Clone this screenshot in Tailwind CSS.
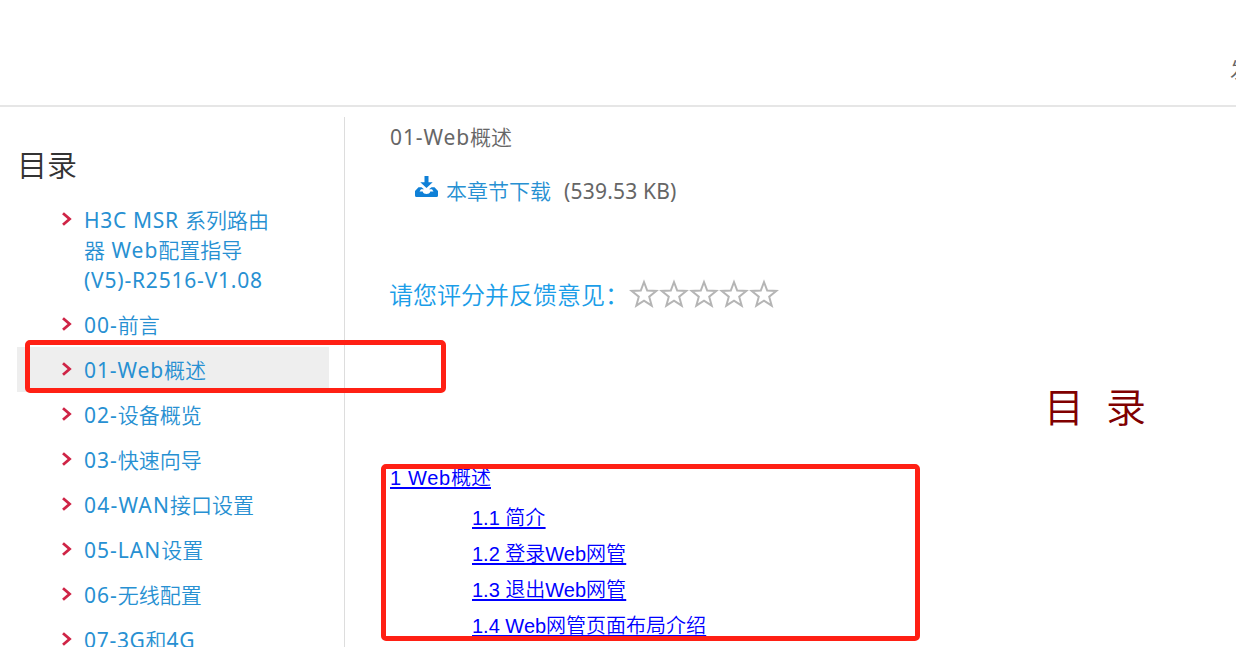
<!DOCTYPE html>
<html lang="zh-CN">
<head>
    <meta charset="UTF-8">
    <title>01-Web概述</title>
    <!-- Tailwind CSS -->
    <script src="https://cdn.jsdelivr.net/npm/@tailwindcss/browser@4"></script>
</head>
<body class="h-[647px] overflow-hidden bg-white font-['Noto_Sans','Noto_Sans_CJK_SC',sans-serif] text-[21px] font-[350] text-[#666]">
    <!-- Icons -->
    <svg class="hidden">
        <symbol id="arrow" viewBox="0 0 10 14">
            <path d="M1 1.2 L7.6 7 L1 12.8" fill="none" stroke="#cf2446" stroke-width="2.8"/>
        </symbol>
        <symbol id="star" viewBox="0 0 30 30">
            <path d="M15 3 L18.2 11.6 L27.3 12 L20.2 17.7 L22.7 26.7 L15 21.6 L7.3 26.7 L9.8 17.7 L2.7 12 L11.8 11.6 Z" fill="#fff" stroke="#b5b5b5" stroke-width="2"/>
        </symbol>
    </svg>

    <!-- Header -->
    <header class="flex h-[107px] justify-end overflow-hidden border-b-2 border-[#e6e6e6] pt-[54px]">
        <span class="-mr-[15px] h-[30px] leading-[30px]">发</span>
    </header>

    <div class="flex h-[540px] pt-[10px]">
        <!-- Sidebar -->
        <aside class="w-[345px] shrink-0 overflow-hidden border-r border-[#ddd] pl-[17px]">
            <h2 class="h-20 pt-[28px] text-[30px] leading-10 text-[#333]">目录</h2>
            <ul class="w-[312px] text-[#2790d2]">
                <li class="flex h-[105px] items-start pt-2">
                    <svg class="mt-[7px] ml-[45px] h-[14px] w-[10px] shrink-0"><use href="#arrow"/></svg>
                    <a href="#" class="ml-3 leading-[30px] whitespace-nowrap"><span class="font-normal tracking-[0.7px]">H3C MSR </span>系列路由<br>器<span class="font-normal tracking-[1px]"> Web</span>配置指导<br><span class="font-normal tracking-[0.8px]">(V5)-R2516-V1.08</span></a>
                </li>
                <li class="flex h-[45px] items-start pt-2">
                    <svg class="mt-[7px] ml-[45px] h-[14px] w-[10px] shrink-0"><use href="#arrow"/></svg>
                    <a href="#" class="ml-3 leading-[30px]"><span class="font-normal tracking-[1px]">00-</span>前言</a>
                </li>
                <li class="flex h-[45px] items-start bg-[#eee] pt-2">
                    <svg class="mt-[7px] ml-[45px] h-[14px] w-[10px] shrink-0"><use href="#arrow"/></svg>
                    <a href="#" class="ml-3 leading-[30px]"><span class="font-normal tracking-[0.9px]">01-Web</span>概述</a>
                </li>
                <li class="flex h-[45px] items-start pt-2">
                    <svg class="mt-[7px] ml-[45px] h-[14px] w-[10px] shrink-0"><use href="#arrow"/></svg>
                    <a href="#" class="ml-3 leading-[30px]"><span class="font-normal tracking-[1px]">02-</span>设备概览</a>
                </li>
                <li class="flex h-[45px] items-start pt-2">
                    <svg class="mt-[7px] ml-[45px] h-[14px] w-[10px] shrink-0"><use href="#arrow"/></svg>
                    <a href="#" class="ml-3 leading-[30px]"><span class="font-normal tracking-[1px]">03-</span>快速向导</a>
                </li>
                <li class="flex h-[45px] items-start pt-2">
                    <svg class="mt-[7px] ml-[45px] h-[14px] w-[10px] shrink-0"><use href="#arrow"/></svg>
                    <a href="#" class="ml-3 leading-[30px]"><span class="font-normal tracking-[1.2px]">04-WAN</span>接口设置</a>
                </li>
                <li class="flex h-[45px] items-start pt-2">
                    <svg class="mt-[7px] ml-[45px] h-[14px] w-[10px] shrink-0"><use href="#arrow"/></svg>
                    <a href="#" class="ml-3 leading-[30px]"><span class="font-normal tracking-[1px]">05-LAN</span>设置</a>
                </li>
                <li class="flex h-[45px] items-start pt-2">
                    <svg class="mt-[7px] ml-[45px] h-[14px] w-[10px] shrink-0"><use href="#arrow"/></svg>
                    <a href="#" class="ml-3 leading-[30px]"><span class="font-normal tracking-[1px]">06-</span>无线配置</a>
                </li>
                <li class="flex h-[45px] items-start pt-2">
                    <svg class="mt-[7px] ml-[45px] h-[14px] w-[10px] shrink-0"><use href="#arrow"/></svg>
                    <a href="#" class="ml-3 leading-[30px]"><span class="font-normal tracking-[0.7px]">07-3G</span>和<span class="font-normal tracking-[0.6px]">4G</span></a>
                </li>
            </ul>
        </aside>

        <!-- Main Content -->
        <main class="min-w-0 flex-1 overflow-hidden pl-[45px]">
            <h1 class="mt-[5px] h-[30px] leading-[30px]"><span class="font-normal tracking-[0.9px]">01-Web</span>概述</h1>
            <div class="mt-6 flex h-[30px] pl-[25px] leading-[30px]">
                <svg class="h-[21px] w-[23px]" viewBox="0 0 23 21" fill="#0f80d7">
                    <path d="M9.500 0h4v6.200h4.200L11.500 12 5.300 6.200h4.200z"/>
                    <path fill-rule="evenodd" d="M3.500 11.300h3L9 13.300H6l-1.500 2.200h3.200c.5 1.800 1.900 2.500 3.800 2.500s3.300-.7 3.800-2.500h3.200L17 13.300h-3l2.500-2h3L23 15v4.500a1.500 1.500 0 0 1-1.500 1.500h-20A1.500 1.500 0 0 1 0 19.500V15z"/>
                </svg>
                <a href="#" class="ml-2 text-[#2790d2]">本章节下载</a>
                <span class="ml-[13px] font-normal tracking-[0.2px]">(539.53 KB)</span>
            </div>
            <div class="mt-[71px] -ml-px flex h-[36px] items-center text-2xl text-[#1b9de8]">
                <span class="w-[240px] whitespace-nowrap">请您评分并反馈意见：</span>
                <div class="-mt-0.5 flex">
                    <svg class="size-[30px]"><use href="#star"/></svg>
                    <svg class="size-[30px]"><use href="#star"/></svg>
                    <svg class="size-[30px]"><use href="#star"/></svg>
                    <svg class="size-[30px]"><use href="#star"/></svg>
                    <svg class="size-[30px]"><use href="#star"/></svg>
                </div>
            </div>
            <div class="mt-[67px] flex h-[54px] gap-[22px] pl-[654px] text-[40px] leading-[54px] text-[#800000]">
                <span>目</span><span>录</span>
            </div>
            <!-- Table of contents -->
            <nav class="mt-[26px] flex flex-col font-['Liberation_Sans','Noto_Sans_CJK_SC',sans-serif] text-[20px] text-[#00f] underline decoration-2 underline-offset-2">
                <a href="#" class="mb-1 h-9 leading-9"><span class="tracking-[0.7px]">1 Web</span>概述</a>
                <a href="#" class="ml-[82px] h-9 leading-9">1.1 简介</a>
                <a href="#" class="ml-[82px] h-9 leading-9">1.2 登录Web网管</a>
                <a href="#" class="ml-[82px] h-9 leading-9">1.3 退出Web网管</a>
                <a href="#" class="ml-[82px] h-9 leading-9">1.4 Web网管页面布局介绍</a>
            </nav>
        </main>
    </div>

    <!-- Highlight frames -->
    <div class="absolute top-[340px] left-[25px] h-[53px] w-[421px] rounded-[5px] border-[5px] border-[#ff2014]"></div>
    <div class="absolute top-[464px] left-[381px] h-[177px] w-[539px] rounded-[5px] border-[5px] border-[#ff2014]"></div>
</body>
</html>
